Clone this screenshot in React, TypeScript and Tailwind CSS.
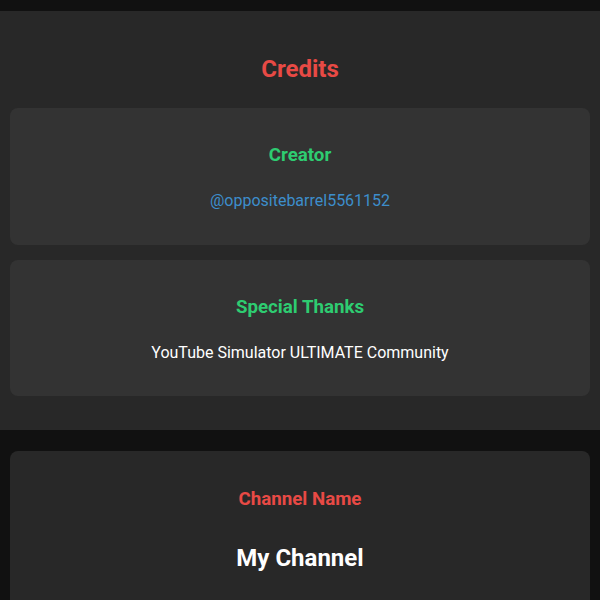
export default function App() {
  return (
    <div
      className="min-h-[600px] w-full bg-[#111111] pt-[11px] text-white"
      style={{ fontFamily: 'Roboto, "Liberation Sans", sans-serif' }}
    >
      <section className="bg-[#282828] px-[10px] pb-[34px]">
        <h2 className="pt-[44px] pb-[25px] text-center text-[24px] font-bold leading-[28px] text-[#e84a45]">
          Credits
        </h2>

        <div className="flex flex-col gap-[15px]">
          <div className="flex h-[137px] flex-col items-center rounded-lg bg-[#333333] pt-[35px]">
            <h3 className="text-[18.72px] font-bold leading-[24px] text-[#2ecc71]">Creator</h3>
            <p className="mt-[22px] text-[16px] leading-[24px] text-[#3d8ecb]">
              @oppositebarrel5561152
            </p>
          </div>

          <div className="flex h-[136px] flex-col items-center rounded-lg bg-[#333333] pt-[35px]">
            <h3 className="text-[18.72px] font-bold leading-[24px] text-[#2ecc71]">Special Thanks</h3>
            <p className="mt-[22px] text-[16px] leading-[24px] text-white">
              YouTube Simulator ULTIMATE Community
            </p>
          </div>
        </div>
      </section>

      <div className="px-[10px] pt-[21px]">
        <div className="flex h-[160px] flex-col items-center rounded-lg bg-[#282828] pt-[36px]">
          <h3 className="text-[18.72px] font-bold leading-[24px] text-[#e84a45]">Channel Name</h3>
          <p className="mt-[32px] text-[24px] font-bold leading-[30px] text-white">My Channel</p>
        </div>
      </div>
    </div>
  )
}
